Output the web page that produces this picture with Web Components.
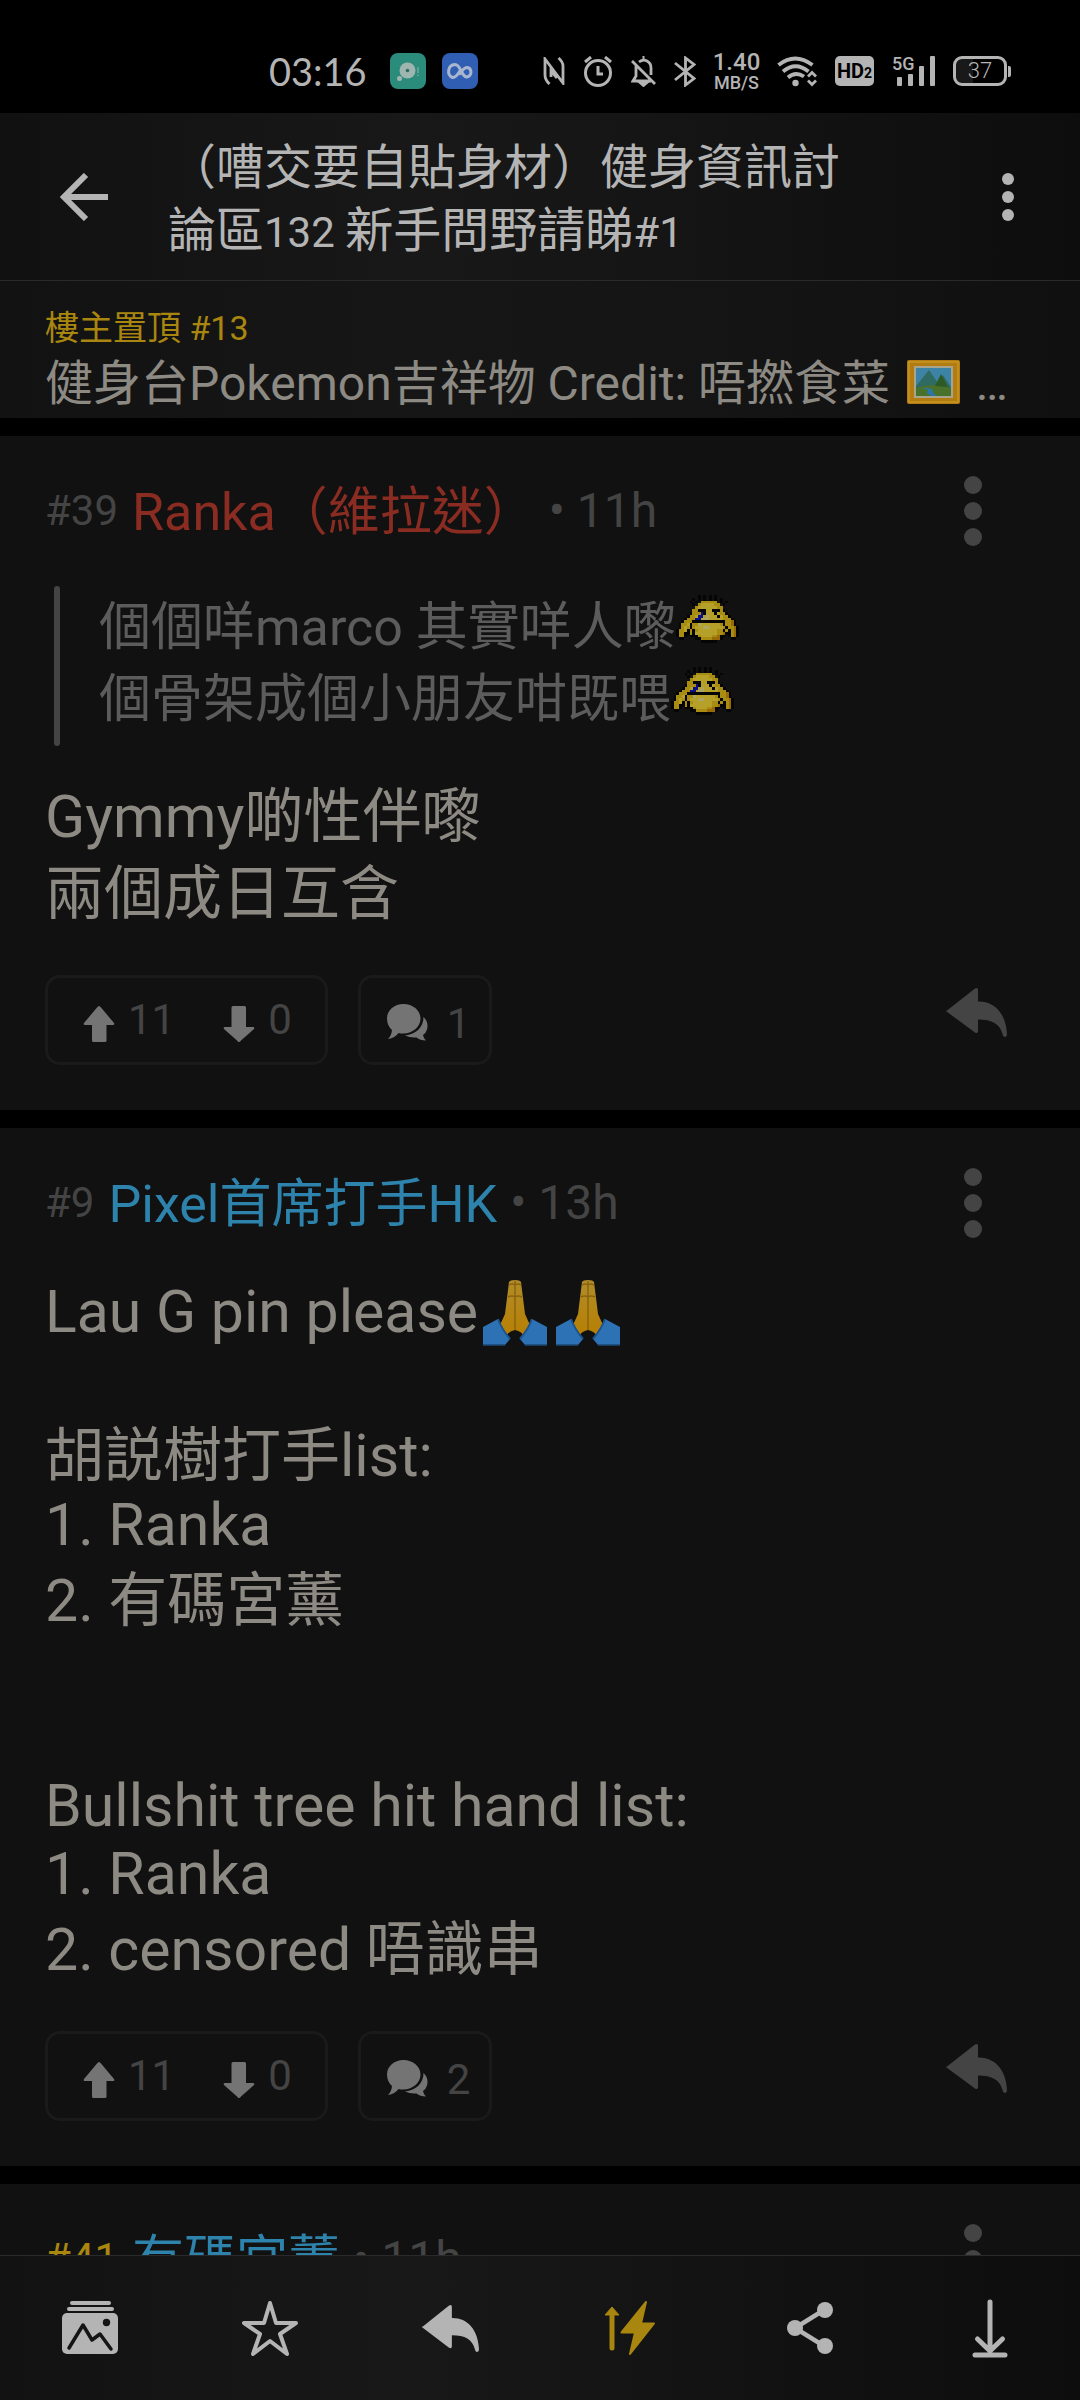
<!DOCTYPE html>
<html lang="zh-Hant-HK">
<head>
<meta charset="utf-8">
<meta name="viewport" content="width=device-width, initial-scale=1">
<title>討論區</title>
<style>
  :root {
    --card: #111111;
    --line: #2a2a2a;
    --bright: #b4b4b4;
    --text: #8d8983;
    --quote: #5c5c5c;
    --muted: #444444;
    --gold: #a8860f;
    --blue: #2d83ab;
    --red: #8a2c22;
  }
  html, body { margin: 0; background: #000; }
  body { font-family: Roboto, "Noto Sans CJK TC", sans-serif; color: var(--text); }
</style>
</head>
<body>

<forum-app>
  <status-bar slot="top" time="03:16" rate="1.40" unit="MB/S" battery="37"></status-bar>
  <thread-header slot="top">（嘈交要自貼身材）健身資訊討<br>論區<span class="num">132 </span>新手問野請睇<span class="num">#1</span></thread-header>
  <pinned-post slot="top" label="樓主置頂 #13">健身台Pokemon吉祥物 Credit: 唔撚食菜 <forum-icon name="picture"></forum-icon> …</pinned-post>

  <post-card number="#39" author="Ranka（維拉迷）" age="11h" tone="red" up="11" down="0" replies="1">
    <quote-block>
      <quote-line>個個咩marco 其實咩人嚟<pixel-face></pixel-face></quote-line>
      <quote-line>個骨架成個小朋友咁既喂<pixel-face></pixel-face></quote-line>
    </quote-block>
    <text-line tall>Gymmy啲性伴嚟</text-line>
    <text-line tall>兩個成日互含</text-line>
  </post-card>

  <post-card number="#9" author="Pixel首席打手HK" age="13h" tone="blue" up="11" down="0" replies="2">
    <text-line>Lau G pin please<forum-icon name="pray"></forum-icon><forum-icon name="pray"></forum-icon></text-line>
    <text-line></text-line>
    <text-line tall>胡説樹打手list:</text-line>
    <text-line>1. Ranka</text-line>
    <text-line tall>2. 有碼宮薰</text-line>
    <text-line></text-line>
    <text-line></text-line>
    <text-line>Bullshit tree hit hand list:</text-line>
    <text-line>1. Ranka</text-line>
    <text-line tall>2. censored 唔識串</text-line>
  </post-card>

  <post-card number="#41" author="有碼宮薰" age="11h" tone="blue" own></post-card>

  <action-bar slot="bottom"></action-bar>
</forum-app>

<script>
const svg = (w, h, body, extra = '') =>
  `<svg width="${w}" height="${h}" viewBox="0 0 ${w} ${h}" aria-hidden="true" ${extra}>${body}</svg>`;

const replyPath = '<path d="M2 23.500L30 1.500Q33 0 33 3V14.500C49 14 61 26 62 47Q62 50 59.500 50Q58 50 57.500 47C55 37 47 32.500 33 32.500V44Q33 47 30 45.500L1.500 24.500Q0 23.500 2 23.500Z" fill="currentColor"/>';

const ICONS = {
  back: svg(48, 48, '<path d="M26 2L4 24L26 46M4 24H48" fill="none" stroke="currentColor" stroke-width="6"/>'),
  more: svg(12, 50, '<g fill="currentColor"><circle cx="6" cy="7" r="6"/><circle cx="6" cy="25" r="6"/><circle cx="6" cy="43" r="6"/></g>'),
  dots: svg(18, 70, '<g fill="currentColor"><circle cx="9" cy="9" r="9"/><circle cx="9" cy="35" r="9"/><circle cx="9" cy="61" r="9"/></g>'),
  up: svg(32, 44, '<path d="M16 8Q17 8 18 9.500L31 25Q32 27 30 27H23.500V42.500Q23.500 44 22 44H10.500Q9 44 9 42.500V27H2Q0 27 1 25L14 9.500Q15 8 16 8Z" fill="currentColor"/>'),
  down: svg(32, 44, '<path d="M16 44Q15 44 14 42.500L1 31Q0 29 2 29H8.500V9.500Q8.500 8 10 8H21.500Q23 8 23 9.500V29H30Q32 29 31 31L18 42.500Q17 44 16 44Z" fill="currentColor"/>'),
  chat: svg(42, 38, '<path d="M17.500 1C27 1 34.500 7.500 34.500 15.500S27 30.500 17.500 30.500Q15 30.500 12.500 30Q9 35 2 36Q5.500 32.500 6 27Q1 22.500 1 15.500C1 7.500 8 1 17.500 1Z" fill="currentColor"/><path d="M37.500 14Q43 19 41 26.500Q40 30 37 32Q37.500 35.500 40 37.500Q34 37.500 30.500 34.500Q24 35 19 32.500C30 31.500 37.500 24 37.500 14Z" fill="currentColor"/>'),
  reply: svg(62, 50, replyPath),
  picture: svg(62, 48, '<rect x="5" y="2" width="53" height="44" rx="2" fill="#b37c12"/><rect x="7" y="4" width="49" height="40" fill="none" stroke="#c28f1d" stroke-width="2"/><rect x="12" y="8" width="39" height="32" fill="#a9a48c"/><rect x="14" y="10" width="35" height="28" fill="#3d83a6"/><path d="M14 28L27 12L36 25L41 17L49 29V38H14Z" fill="#2f6b62"/><path d="M14 30Q30 24 49 30V38H14Z" fill="#48712b"/><path d="M33 28L39 16L46 29Z" fill="#2c5a24"/><path d="M19 30Q29 31 25 34Q24 36 30 38H35Q30 35 31 33Q29 29 19 30Z" fill="#2b76a8"/>'),
  pray: svg(73, 66, '<defs><linearGradient id="g" x2="0" y2="1"><stop stop-color="#b08c2a"/><stop offset="1" stop-color="#b87f00"/></linearGradient></defs><path d="M31 2Q32 0 37 0Q42 0 43 2L47 34Q50 42 55 49L47 58Q44 51 37 50Q30 51 27 58L19 49Q24 42 27 34Z" fill="url(#g)"/><path d="M37 1V50M31 5Q34 3 37 5Q40 3 43 5M30 17Q34 15 37 17Q40 15 44 17" stroke="#8a6410" stroke-width="1.500" fill="none"/><path d="M5 47L20 39Q23 48 32 59L27 65H5Z" fill="#2d72b4"/><path d="M69 47L54 39Q51 48 42 59L47 65H69Z" fill="#2d72b4"/><path d="M20 39Q23 48 32 59M54 39Q51 48 42 59" stroke="#1f558f" stroke-width="2" fill="none"/><path d="M5 65H27M47 65H69" stroke="#1b4a75" stroke-width="1.500"/>'),
  nfc: svg(22, 28, '<path d="M6.500 27Q2 23 2 18V2L20 26V9Q20 5 15.500 1M8 20V14L14 21" fill="none" stroke="currentColor" stroke-width="2.800"/>'),
  alarm: svg(30, 31, '<circle cx="15" cy="17" r="12.500" fill="none" stroke="currentColor" stroke-width="3"/><path d="M15 10V18H20M2 6L8 1M28 6L22 1" fill="none" stroke="currentColor" stroke-width="3"/>'),
  bell: svg(25, 31, '<path d="M5 9V20L2 25H20M8 6Q12 3 16 5Q20 7 20 12V19M1 5L24 28" fill="none" stroke="currentColor" stroke-width="2.800"/><path d="M12.500 0V4M9 27H16L12.500 30Z" stroke="currentColor" stroke-width="2" fill="currentColor"/>'),
  bt: svg(22, 31, '<path d="M1 7L20 22.500L11.500 29V2L20 8.500L1 24" fill="none" stroke="currentColor" stroke-width="2.800"/>'),
  wifi: svg(40, 31, '<g fill="none" stroke="currentColor" stroke-width="3.800"><path d="M1.500 9Q18 -4 35.500 9"/><path d="M6 15.500Q18.500 5 31.500 15.500"/><path d="M11 21.500Q18.500 15 27 20.500"/></g><circle cx="18.500" cy="27" r="3.200" fill="currentColor"/><path d="M31 20.500L35 16.500L39 20.500M31 24.500L35 28.500L39 24.500" fill="none" stroke="currentColor" stroke-width="2.800"/>'),
  bars: svg(40, 30, '<g fill="currentColor"><rect x="0" y="21" width="5" height="9" rx="1"/><rect x="11" y="18" width="5" height="12" rx="1"/><rect x="22" y="10" width="5" height="20" rx="1"/><rect x="33" y="0" width="5" height="30" rx="1"/></g>'),
  appGreen: svg(36, 36, '<rect width="36" height="36" rx="8" fill="#2b8c7c"/><circle cx="17.500" cy="17.500" r="8" fill="#9fb5b0"/><circle cx="17.500" cy="17.500" r="1.800" fill="#2b6b61"/><circle cx="9.500" cy="25.500" r="2.500" fill="#9fb5b0"/><path d="M28 14V20M28 21.500V23" stroke="#6fa59b" stroke-width="1.600"/>'),
  appBlue: svg(36, 36, '<rect width="36" height="36" rx="8" fill="#2f5eb3"/><path d="M18 18C15 22 14 24.500 10.500 24.500C4.500 22 5.500 12 13 11.500C19 11.500 19 24 25 24C30.500 22.500 30 15 25 14.500C21.500 14.500 20 18.500 17 21.500" fill="none" stroke="#a9b6cf" stroke-width="3"/>'),
  gallery: svg(58, 54, '<g fill="currentColor"><rect x="9" y="0" width="41" height="4" rx="2"/><rect x="6" y="6" width="47" height="4" rx="2"/><rect x="1" y="12" width="56" height="41" rx="5"/></g><path d="M8 47L22 24L31 39L39 33L50 48" fill="none" stroke="#151515" stroke-width="3.500" stroke-linecap="round" stroke-linejoin="round"/><circle cx="45.500" cy="21.500" r="3.700" fill="#151515"/>'),
  star: svg(60, 58, '<path d="M30 4L36 24H56L40 35L47 55L30 42L13 55L20 35L4 24H24Z" fill="none" stroke="currentColor" stroke-width="4" stroke-linejoin="round"/>'),
  replyBar: '<svg width="58" height="48" viewBox="0 0 62 50" preserveAspectRatio="none" aria-hidden="true">' + replyPath + '</svg>',
  boost: svg(52, 56, '<path d="M8 16V48" stroke="currentColor" stroke-width="5" stroke-linecap="round"/><path d="M8 7L15 15H1Z" fill="currentColor" stroke="currentColor" stroke-linejoin="round"/><path d="M42 2L37 23.500H50L26 54L31 32.500H17.500Z" fill="currentColor" stroke="currentColor" stroke-width="2" stroke-linejoin="round"/>'),
  share: svg(48, 54, '<path d="M38 9L9 27L38 45" fill="none" stroke="currentColor" stroke-width="4.500"/><g fill="currentColor"><circle cx="39" cy="9" r="8"/><circle cx="9" cy="27" r="8"/><circle cx="39" cy="45" r="8"/></g>'),
  download: svg(36, 60, '<path d="M18 4V52M5.500 41L18 53L30.500 41M3 57H33" fill="none" stroke="currentColor" stroke-width="5" stroke-linecap="round" stroke-linejoin="round"/>')
};

const define = (name, render) => customElements.define(name, class extends HTMLElement {
  constructor() { super(); this.attachShadow({ mode: 'open' }); }
  connectedCallback() {
    this.shadowRoot.innerHTML = render(this);
  }
});
const a = (el, key) => el.getAttribute(key) || '';
const resetButton = 'button{all:unset;box-sizing:border-box;display:flex;align-items:center;cursor:pointer}';

define('forum-icon', el => `
  <style>:host{display:inline-block;line-height:0;flex:none} svg{display:block}
  :host([name=picture]){vertical-align:-6px}
  :host([name=pray]){vertical-align:-14px}</style>
  ${ICONS[a(el, 'name')] || ''}`);

define('forum-app', () => `
  <style>
    :host{display:flex;flex-direction:column;height:100vh;overflow:hidden;background:#000}
    main{flex:1;min-height:0;overflow-y:auto;scrollbar-width:none;display:flex;flex-direction:column;gap:18px;padding-top:18px}
    ::slotted(*){flex:none}
  </style>
  <slot name="top"></slot><main><slot></slot></main><slot name="bottom"></slot>`);

define('status-bar', el => `
  <style>
    :host{display:flex;align-items:center;box-sizing:border-box;height:113px;padding:29px 69px 0 269px;color:var(--bright)}
    time{font:38px Lato,sans-serif;margin-right:23px}
    .apps{display:flex;gap:16px}
    .sys{display:flex;align-items:center;gap:18px;margin-left:auto}
    .speed{display:flex;flex-direction:column;align-items:center;width:45px}
    .speed b{font:500 24px/24px Roboto,sans-serif}
    .speed i{font:500 18px/18px Roboto,sans-serif}
    .hd{box-sizing:border-box;width:39px;height:30px;border-radius:5px;background:var(--bright);color:#000;font:700 20px/30px Roboto,sans-serif;text-align:center;white-space:nowrap}
    .hd small{font-size:14px}
    .sig{display:grid;width:43px;height:30px}
    .sig>*{grid-area:1/1}
    .sig span{font:500 18px/15px Roboto,sans-serif}
    .sig forum-icon{margin-left:5px}
    .bat{display:flex;align-items:center;gap:1px}
    .cell{box-sizing:border-box;width:54px;height:30px;border:3px solid var(--bright);border-radius:9px;font:300 22px/24px Roboto,sans-serif;text-align:center;background:linear-gradient(90deg,#191919 36%,#000 36%)}
    .tip{width:3px;height:11px;border-radius:0 2px 2px 0;background:var(--bright)}
  </style>
  <time>${a(el, 'time')}</time>
  <div class="apps"><forum-icon name="appGreen"></forum-icon><forum-icon name="appBlue"></forum-icon></div>
  <div class="sys">
    <forum-icon name="nfc"></forum-icon><forum-icon name="alarm"></forum-icon><forum-icon name="bell"></forum-icon><forum-icon name="bt"></forum-icon>
    <div class="speed"><b>${a(el, 'rate')}</b><i>${a(el, 'unit')}</i></div>
    <forum-icon name="wifi"></forum-icon>
    <div class="hd">HD<small>2</small></div>
    <div class="sig"><forum-icon name="bars"></forum-icon><span>5G</span></div>
    <div class="bat"><div class="cell">${a(el, 'battery')}</div><div class="tip"></div></div>
  </div>`);

define('thread-header', () => `
  <style>
    ${resetButton}
    :host{display:flex;align-items:center;box-sizing:border-box;height:168px;padding:0 66px 0 60px;
      background:linear-gradient(90deg,#111 0,#181818 38%,#151515 60%,#0d0d0d 100%);border-bottom:1px solid var(--line);color:var(--bright)}
    h1{flex:1;margin:0 0 0 60px;padding-top:6px;font-size:48px;line-height:63px;font-weight:400}
    ::slotted(.num){font-size:42px;white-space:pre}
  </style>
  <button aria-label="返回"><forum-icon name="back"></forum-icon></button>
  <h1><slot></slot></h1>
  <button aria-label="更多"><forum-icon name="more"></forum-icon></button>`);

define('pinned-post', el => `
  <style>
    :host{display:block;padding:25px 45px 4px;background:linear-gradient(90deg,#121212 0,#161616 38%,#141414 70%,#101010 100%)}
    .label{font-size:34px;line-height:44px;color:var(--gold);margin-bottom:4px}
    .body{font-size:48px;line-height:60px;height:60px;white-space:nowrap;overflow:hidden}
  </style>
  <div class="label">${a(el, 'label')}</div><div class="body"><slot></slot></div>`);

define('text-line', () => `
  <style>:host{display:block;font-size:59px;line-height:68px;height:68px}
  :host([tall]){padding:8px 0 1px}</style><slot></slot>`);

define('quote-block', () => `
  <style>:host{display:flex;margin:0 0 29px 9px;color:var(--quote)}
  .bar{width:6px;border-radius:3px;background:var(--muted)}
  .lines{flex:1;padding:6px 0 10px 39px}</style>
  <div class="bar"></div><div class="lines"><slot></slot></div>`);

define('quote-line', () => `
  <style>:host{display:block;font-size:52px;line-height:72px;height:72px;white-space:nowrap}</style><slot></slot>`);

const FACE = [
  '........k.k.k.k........',
  '......k.k.k.k.k.k......',
  '.....k.k.yyyyyy.k.k....',
  '......k.yYYYYYyy.k.....',
  '.......yYYYYYYYyy......',
  '......yykkkYYkkkyk.....',
  '.....kyyybkYYYkYyyk....',
  '....kyyYbbYwYYYkYyyk...',
  '...kyyybbYwwYYYYYyyyk..',
  '..kyyykkkkkkkkkkkkyyok.',
  '.kyyYkyywYYYYYYYykyyok.',
  '.kyYykyYYYwwYYYYYykyyok',
  'kyyYkykyYYYYYYYyykykyok',
  'kyykkykYYYYYYYYyyokkyok',
  'kyyk.kkkyYYYYyyokk.kyok',
  '.kk....kkyyyyoook...kk.',
  '.........kkkkkk........'
];
const TINT = { k: '#050505', y: '#a88d10', Y: '#b5a02a', w: '#aca565', o: '#9a6a08', b: '#0a0f8c' };
define('pixel-face', () => {
  let body = '';
  FACE.forEach((row, y) => [...row].forEach((c, x) => {
    if (TINT[c]) body += `<rect x="${x}" y="${y}" width="1" height="1" fill="${TINT[c]}"/>`;
  }));
  return `<style>:host{display:inline-block;line-height:0;vertical-align:2px} svg{display:block}</style>
    <svg width="63" height="48" viewBox="0 0 23 17" preserveAspectRatio="none" shape-rendering="crispEdges" aria-hidden="true">${body}</svg>`;
});

define('post-card', el => `
  <style>
    ${resetButton}
    :host{display:block;padding:40px 73px 45px 45px;background:var(--card)}
    header{display:flex;align-items:center;height:70px;margin-bottom:40px;white-space:nowrap;color:var(--muted)}
    .no{font-size:42px;line-height:48px;margin-right:14px}
    :host([own]) .no{color:var(--gold)}
    .name{font-size:52px;line-height:62px;margin-right:13px;padding-top:3px;color:var(--${a(el, 'tone')})}
    .age{font-size:48px;line-height:54px}
    header button{margin-left:auto;padding-right:25px}
    footer{display:flex;align-items:flex-start;margin-top:46px;font-size:42px;line-height:48px;color:var(--muted)}
    .box{display:flex;align-items:center;box-sizing:border-box;height:90px;border:3px solid #1a1a1a;border-radius:15px}
    .box forum-icon{color:#747474}
    .votes{padding:0 33px 0 35px;gap:48px}
    .votes button{gap:13px}
    .box.talk{margin-left:30px;padding:8px 19px 0 25px;gap:19px}
    .talk forum-icon{margin-bottom:4px}
    .reply{margin-left:auto;padding-top:12px}
  </style>
  <header>
    <span class="no">${a(el, 'number')}</span>
    <span class="name">${a(el, 'author')}</span>
    <span class="age">• ${a(el, 'age')}</span>
    <button aria-label="更多"><forum-icon name="dots"></forum-icon></button>
  </header>
  <slot></slot>
  ${el.hasAttribute('up') ? `<footer>
    <div class="box votes">
      <button><forum-icon name="up"></forum-icon><span>${a(el, 'up')}</span></button>
      <button><forum-icon name="down"></forum-icon><span>${a(el, 'down')}</span></button>
    </div>
    <button class="box talk"><forum-icon name="chat"></forum-icon><span>${a(el, 'replies')}</span></button>
    <button class="reply" aria-label="回覆"><forum-icon name="reply"></forum-icon></button>
  </footer>` : ''}`);

define('action-bar', () => `
  <style>
    ${resetButton}
    :host{display:block;border-top:1px solid var(--line);background:linear-gradient(90deg,#121212 0,#181818 38%,#131313 65%,#0d0d0d 100%);color:var(--bright)}
    nav{display:grid;grid-template-columns:repeat(6,1fr);height:144px}
    button{justify-content:center}
    .on{color:var(--gold)}
  </style>
  <nav>
    <button aria-label="圖片"><forum-icon name="gallery"></forum-icon></button>
    <button aria-label="收藏"><forum-icon name="star"></forum-icon></button>
    <button aria-label="回覆"><forum-icon name="replyBar"></forum-icon></button>
    <button class="on" aria-label="推"><forum-icon name="boost"></forum-icon></button>
    <button aria-label="分享"><forum-icon name="share"></forum-icon></button>
    <button aria-label="到底"><forum-icon name="download"></forum-icon></button>
  </nav>`);
</script>
</body>
</html>
